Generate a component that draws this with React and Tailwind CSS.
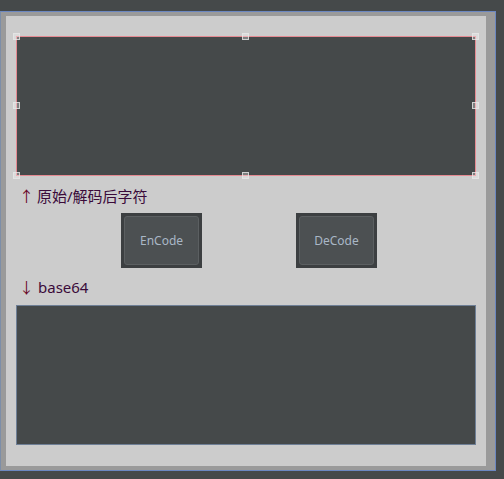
import React from "react";

function Handle({ cls }) {
  return (
    <div
      className={`absolute w-[7px] h-[7px] border border-[#e6e6e6]/80 bg-white/30 ${cls}`}
    />
  );
}

function Btn({ label }) {
  return (
    <div className="w-[81px] h-[55px] bg-[#3c3f41] p-[3px]">
      <div className="w-full h-full rounded-[3px] border border-[#5b5f61] bg-[#4c5052] flex items-center justify-center text-[12px] text-[#a9b7c6]" style={{ fontFamily: '"Noto Sans", "Open Sans", sans-serif' }}>
        {label}
      </div>
    </div>
  );
}

export default function App() {
  const cjk = { fontFamily: '"Noto Sans", "Noto Sans CJK SC", sans-serif' };
  return (
    <div className="w-[504px] h-[479px] bg-[#45494a] pt-[11px]">
      <div className="w-[496px] h-[460px] border border-[#6b87c1] border-l-[#7d8ea8] bg-[#9a9a9a] pt-[4px] pl-[5px]">
        <div className="w-[480px] h-[450px] bg-[#cccccc] px-[10px] pt-[20px] flex flex-col">
          <div className="relative w-[460px] h-[140px] bg-[#45494a] border border-[#e58a92]">
            <Handle cls="-left-[4px] -top-[4px]" />
            <Handle cls="left-[225px] -top-[4px]" />
            <Handle cls="-right-[4px] -top-[4px]" />
            <Handle cls="-left-[4px] top-[65px]" />
            <Handle cls="-right-[4px] top-[65px]" />
            <Handle cls="-left-[4px] -bottom-[4px]" />
            <Handle cls="left-[225px] -bottom-[4px]" />
            <Handle cls="-right-[4px] -bottom-[4px]" />
          </div>
          <div className="mt-[10px] h-[20px] flex items-center pl-[3px] text-[15px] leading-[20px]" style={cjk}>
            <span className="text-[#6a0a2a] w-[18px]">↑</span>
            <span className="text-[#3a0a3a]">原始/解码后字符</span>
          </div>
          <div className="mt-[7px] flex pl-[105px] gap-[94px]">
            <Btn label="EnCode" />
            <Btn label="DeCode" />
          </div>
          <div className="mt-[9px] h-[20px] flex items-center pl-[3px] text-[15px] leading-[20px]" style={cjk}>
            <span className="text-[#6a0a2a] w-[19px]">↓</span>
            <span className="text-[#3a0a3a]">base64</span>
          </div>
          <div className="mt-[8px] w-[460px] h-[140px] bg-[#45494a] border border-[#6e7f96]" />
        </div>
      </div>
    </div>
  );
}
